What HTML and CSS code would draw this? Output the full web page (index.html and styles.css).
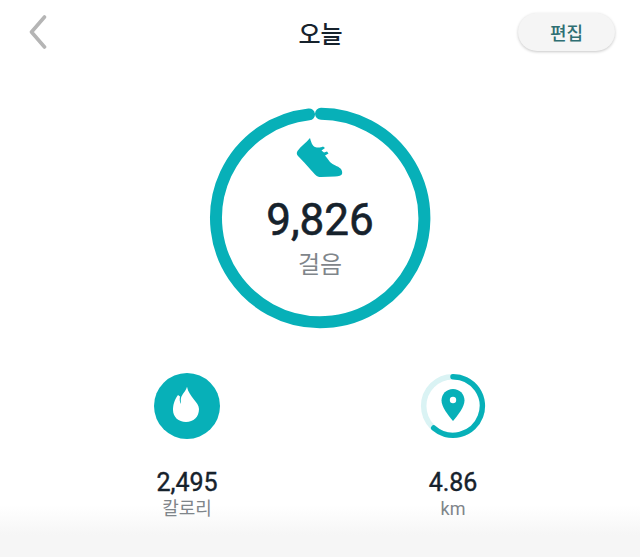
FILE: index.html
```html
<!DOCTYPE html>
<html lang="ko">
  <head>
    <meta charset="UTF-8" />
    <title>오늘</title>
    <link rel="stylesheet" href="styles.css">
  </head>
  <body>
    <div class="page">
      <header class="top-bar">
        <a class="back-btn" href="#" aria-label="뒤로">
          <svg width="18" height="34" viewBox="0 0 18 34"><path d="M15.5 2 L2.5 17 L15.5 32" fill="none" stroke="#b5b5b5" stroke-width="3.6" stroke-linecap="round" stroke-linejoin="round"/></svg>
        </a>
        <h1 class="top-title">오늘</h1>
        <button class="edit-btn">편집</button>
      </header>

      <section class="steps">
        <div class="steps-ring">
          <svg class="ring-svg" width="222" height="222" viewBox="0 0 222 222">
            <path d="M112 6.8 A104.2 104.2 0 1 1 100 7.4" fill="none" stroke="#07b0b8" stroke-width="12" stroke-linecap="round"/>
          </svg>
          <div class="steps-content">
            <svg class="shoe" width="48" height="42" viewBox="0 0 48 42">
              <path d="M15 1 C16 5 17.5 9 20 10 C23 11 26 10.5 28 9.5 L30 11 L26.5 13.5 L29 15.5 L32 14.5 L33.5 16.5 L30 18.5 L32 21 L35 25 C38 28 43 29 45.5 31.5 C47 33 47.5 35.5 47 37 C46.5 38.5 44 39.5 40 39.5 L26 40 C23.5 40 22 39.5 20 37.5 C15 32 8 24 3 19 C1.5 17.5 1.5 15.5 2.5 14 C6 9 11 6 15 1 Z" fill="#07b0b8"/>
            </svg>
            <div class="steps-num">9,826</div>
            <div class="steps-label">걸음</div>
          </div>
        </div>
      </section>

      <section class="stats">
        <div class="stat">
          <svg class="stat-icon" width="66" height="66" viewBox="0 0 66 66">
            <circle cx="33" cy="33" r="33" fill="#07b0b8"/>
            <path d="M33 13.7 C32 18 28 21 27 25 C26.5 27 27 29.5 27 31 C25.5 29 25.5 26 26 23.5 L24 22 C20 27 19 33 19 37 C19 44 24.5 49 32 49 C39.5 49 45 44 45 36 C45 29 35 24 33 13.7 Z" fill="#fff"/>
          </svg>
          <div class="stat-num">2,495</div>
          <div class="stat-label">칼로리</div>
        </div>
        <div class="stat">
          <svg class="stat-icon" width="66" height="66" viewBox="0 0 66 66">
            <circle cx="33" cy="33" r="29.3" fill="none" stroke="#daf3f4" stroke-width="5.5"/>
            <path d="M33 3.7 A29.3 29.3 0 1 1 13.7 55" fill="none" stroke="#07b0b8" stroke-width="5.5" stroke-linecap="round"/>
            <path d="M33 16 C26.5 16 21.5 21 21.5 27.5 C21.5 34 28 42 33 48 C38 42 44.5 34 44.5 27.5 C44.5 21 39.5 16 33 16 Z" fill="#07b0b8"/>
            <circle cx="33" cy="27" r="3.2" fill="#fff"/>
          </svg>
          <div class="stat-num">4.86</div>
          <div class="stat-label">km</div>
        </div>
      </section>
    </div>
  </body>
</html>
```

FILE: styles.css
```css
* {
  margin: 0;
  padding: 0;
  box-sizing: border-box;
}

body {
  font-family: Roboto, "Noto Sans CJK KR", sans-serif;
  color: #16222c;
}

.page {
  height: 557px;
  overflow: hidden;
  background: linear-gradient(#fff 505px, #f6f6f6 535px);
}

/* top bar */
.top-bar {
  display: flex;
  align-items: center;
  justify-content: space-between;
  height: 64px;
  padding: 0 25px 0 29px;
}

.back-btn {
  display: flex;
  width: 94px;
}

.top-title {
  font-size: 24px;
  font-weight: 500;
}

.edit-btn {
  width: 97px;
  height: 38px;
  border: 0;
  border-radius: 19px;
  background: #f5f5f5;
  box-shadow: 0 1px 3px rgba(0, 0, 0, 0.22);
  color: #2f6f73;
  font-family: inherit;
  font-size: 18px;
  font-weight: 500;
}

/* big ring */
.steps {
  display: flex;
  justify-content: center;
  padding-top: 43px;
}

.steps-ring {
  position: relative;
  width: 222px;
  height: 222px;
}

.ring-svg {
  position: absolute;
  top: 0;
  left: 0;
}

.steps-content {
  display: flex;
  flex-direction: column;
  align-items: center;
  padding-top: 30px;
}

.shoe {
  display: block;
  margin-left: -2px;
}

.steps-num {
  margin-top: 15px;
  font-size: 44px;
  font-weight: 400;
  line-height: 52px;
  -webkit-text-stroke: 0.6px #16222c;
}

.steps-label {
  margin-top: 3px;
  font-size: 24px;
  line-height: 32px;
  color: #7f858a;
}

/* bottom stats */
.stats {
  display: flex;
  justify-content: center;
  padding-top: 44px;
}

.stat {
  display: flex;
  flex-direction: column;
  align-items: center;
  width: 266px;
}

.stat-icon {
  display: block;
}

.stat-num {
  margin-top: 29px;
  font-size: 25px;
  font-weight: 400;
  line-height: 30px;
  -webkit-text-stroke: 0.4px #16222c;
}

.stat-label {
  margin-top: -1px;
  font-size: 18px;
  line-height: 24px;
  color: #7f858a;
}
```
